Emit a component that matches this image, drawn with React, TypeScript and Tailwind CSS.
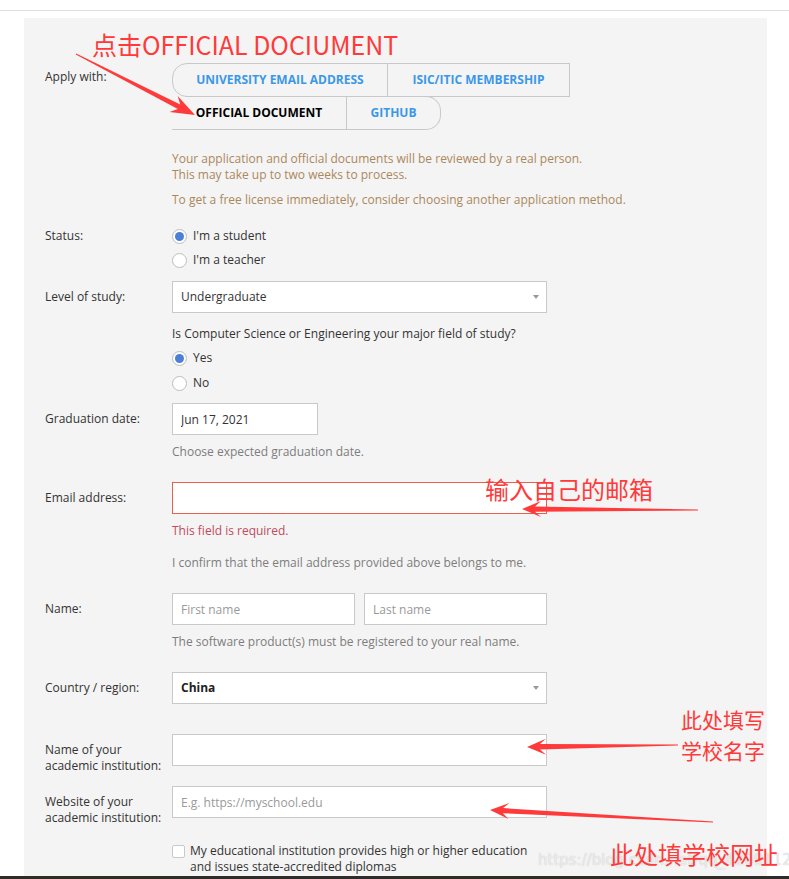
import React from 'react';

type Pt = [number, number];

// tapered annotation arrow, thin tail -> thick shaft -> barbed head
function arrowPoints(tail: Pt, tip: Pt, head = 18, hw = 8, sw = 2.4): string {
  const [x1, y1] = tail;
  const [x2, y2] = tip;
  const dx = x2 - x1;
  const dy = y2 - y1;
  const len = Math.hypot(dx, dy);
  const ux = dx / len;
  const uy = dy / len;
  const nx = -uy;
  const ny = ux;
  const bx = x2 - ux * head;
  const by = y2 - uy * head;
  const nb = 4; // barb pulled back
  const pts: Pt[] = [
    [x1 + nx * 0.4, y1 + ny * 0.4],
    [bx + ux * nb + nx * sw, by + uy * nb + ny * sw],
    [bx - ux * 2 + nx * hw, by - uy * 2 + ny * hw],
    [x2, y2],
    [bx - ux * 2 - nx * hw, by - uy * 2 - ny * hw],
    [bx + ux * nb - nx * sw, by + uy * nb - ny * sw],
    [x1 - nx * 0.4, y1 - ny * 0.4],
  ];
  return pts.map(p => `${p[0].toFixed(1)},${p[1].toFixed(1)}`).join(' ');
}

function Radio({ checked, label }: { checked?: boolean; label: string }) {
  return (
    <div className="flex h-[24px] items-center gap-[6px]">
      <span className="flex h-[15px] w-[15px] items-center justify-center rounded-full border border-[#bdbdbd] bg-white">
        {checked && <span className="h-[9px] w-[9px] rounded-full bg-[#4b7fd9]" />}
      </span>
      <span className="text-[#333]">{label}</span>
    </div>
  );
}

function SelectBox({ value, bold }: { value: string; bold?: boolean }) {
  return (
    <div className="flex h-[32px] w-[375px] items-center justify-between border border-[#c9c9c9] bg-white pl-[8px] pr-[7px]">
      <span className={bold ? 'font-bold text-[#222]' : 'text-[#333]'}>{value}</span>
      <span className="h-0 w-0 border-x-[3px] border-t-[4px] border-x-transparent border-t-[#999]" />
    </div>
  );
}

function TextInput({ placeholder, width = 'w-[375px]', value, error }: { placeholder?: string; width?: string; value?: string; error?: boolean }) {
  return (
    <input
      readOnly
      value={value ?? ''}
      placeholder={placeholder}
      className={`${width} h-[32px] border ${error ? 'border-[#e8604c]' : 'border-[#c9c9c9]'} bg-white px-[8px] text-[12px] text-[#333] outline-none placeholder:text-[#9a9a9a]`}
    />
  );
}

function Row({ label, labelPt = 'pt-[8px]', className = '', children }: { label?: React.ReactNode; labelPt?: string; className?: string; children: React.ReactNode }) {
  return (
    <div className={`grid grid-cols-[127px_375px] items-start ${className}`}>
      <div className={`text-[#333] ${labelPt}`}>{label}</div>
      <div>{children}</div>
    </div>
  );
}

export default function App() {
  return (
    <div className="relative h-[879px] w-[789px] overflow-hidden bg-white font-['Open_Sans',sans-serif] text-[12px] leading-4">
      <div className="h-[10px]" />
      <div className="h-px bg-[#dedede]" />
      <div className="h-[7px]" />

      <div className="ml-[24px] h-[858px] w-[743px] bg-[#f4f4f4] pl-[21px] pt-[45px]">
        <Row label="Apply with:" labelPt="pt-[6px]">
          <div className="flex h-[34px] text-[12px] font-bold uppercase text-[#3b98e8]">
            <div className="flex w-[216px] shrink-0 items-center justify-center rounded-l-[15px] border border-[#c8c8c8]">University email address</div>
            <div className="flex w-[182px] shrink-0 items-center justify-center border border-l-0 border-[#c8c8c8]">ISIC/ITIC membership</div>
          </div>
          <div className="-mt-px flex h-[34px] text-[12px] font-bold uppercase">
            <div className="flex w-[175px] shrink-0 items-center justify-center border-b border-r border-[#c8c8c8] text-black">Official document</div>
            <div className="flex w-[94px] shrink-0 items-center justify-center rounded-r-[15px] border border-l-0 border-[#c8c8c8] text-[#3b98e8]">GitHub</div>
          </div>
          <div className="mt-[21px] whitespace-nowrap text-[#ab885c]">
            <p>Your application and official documents will be reviewed by a real person.<br />This may take up to two weeks to process.</p>
            <p className="mt-[9px]">To get a free license immediately, consider choosing another application method.</p>
          </div>
        </Row>

        <Row label="Status:" labelPt="pt-[4px]" className="mt-[16px]">
          <Radio checked label="I'm a student" />
          <Radio label="I'm a teacher" />
        </Row>

        <Row label="Level of study:" className="mt-[9px]">
          <SelectBox value="Undergraduate" />
          <p className="mt-[13px] whitespace-nowrap text-[#333]">Is Computer Science or Engineering your major field of study?</p>
          <div className="mt-[4px]">
            <div className="h-[25px]"><Radio checked label="Yes" /></div>
            <div className="h-[25px]"><Radio label="No" /></div>
          </div>
        </Row>

        <Row label="Graduation date:" className="mt-[7px]">
          <TextInput width="w-[146px]" value="Jun 17, 2021" />
          <p className="mt-[9px] text-[#7d7d7d]">Choose expected graduation date.</p>
        </Row>

        <Row label="Email address:" className="mt-[22px]">
          <TextInput error />
          <p className="mt-[9px] text-[#c24a5e]">This field is required.</p>
          <p className="mt-[16px] whitespace-nowrap text-[#7d7d7d]">I confirm that the email address provided above belongs to me.</p>
        </Row>

        <Row label="Name:" className="mt-[22px]">
          <div className="flex gap-[9px]">
            <TextInput width="w-[183px]" placeholder="First name" />
            <TextInput width="w-[183px]" placeholder="Last name" />
          </div>
          <p className="mt-[9px] whitespace-nowrap text-[#7d7d7d]">The software product(s) must be registered to your real name.</p>
        </Row>

        <Row label="Country / region:" className="mt-[22px]">
          <SelectBox value="China" bold />
        </Row>

        <Row label={<>Name of your<br />academic institution:</>} className="mt-[30px]">
          <TextInput />
        </Row>

        <Row label={<>Website of your<br />academic institution:</>} className="mt-[12px]">
          <TextInput placeholder="E.g. https://myschool.edu" />
        </Row>

        <Row className="mt-[17px]" labelPt="">
          <div className="flex gap-[5px]">
            <span className="mt-[2px] h-[13px] w-[13px] shrink-0 rounded-[2px] border border-[#c9c9c9] bg-white" />
            <p className="whitespace-nowrap text-[#333]">My educational institution provides high or higher education<br />and issues state-accredited diplomas</p>
          </div>
        </Row>
      </div>

      <div className="h-[3px] bg-[#2f2b29]" />

      {/* screenshot annotations */}
      <svg className="pointer-events-none absolute inset-0" width="789" height="879">
        <g fill="#ff3a3a">
          <polygon points={arrowPoints([76, 54], [195, 115], 22, 9, 2.6)} />
          <polygon points={arrowPoints([698, 510], [522, 509], 17, 8, 2.6)} />
          <polygon points={arrowPoints([678, 745], [527, 747], 17, 8, 2.8)} />
          <polygon points={arrowPoints([713, 822], [490, 810], 17, 8, 2.6)} />
        </g>
      </svg>
      <div className="pointer-events-none absolute left-[92px] top-[30px] font-['Noto_Sans_CJK_SC',sans-serif] text-[25px] leading-[29px] text-[#ff3a3a]">点击OFFICIAL DOCIUMENT</div>
      <div className="pointer-events-none absolute left-[485px] top-[475px] font-['Noto_Sans_CJK_SC',sans-serif] text-[24px] leading-[28px] text-[#ff3a3a]">输入自己的邮箱</div>
      <div className="pointer-events-none absolute left-[681px] top-[704px] font-['Noto_Sans_CJK_SC',sans-serif] text-[21px] leading-[31px] text-[#ff3a3a]">此处填写<br />学校名字</div>
      <div className="pointer-events-none absolute left-[538px] top-[851px] font-['DejaVu_Sans',sans-serif] text-[15px] leading-[18px] text-white/70 [text-shadow:0_0_1px_#b5b5b5]">https://blog.csdn.net/qq_42091121</div>
      <div className="pointer-events-none absolute left-[610px] top-[840px] font-['Noto_Sans_CJK_SC',sans-serif] text-[24px] leading-[28px] text-[#ff3a3a]">此处填学校网址</div>
    </div>
  );
}
